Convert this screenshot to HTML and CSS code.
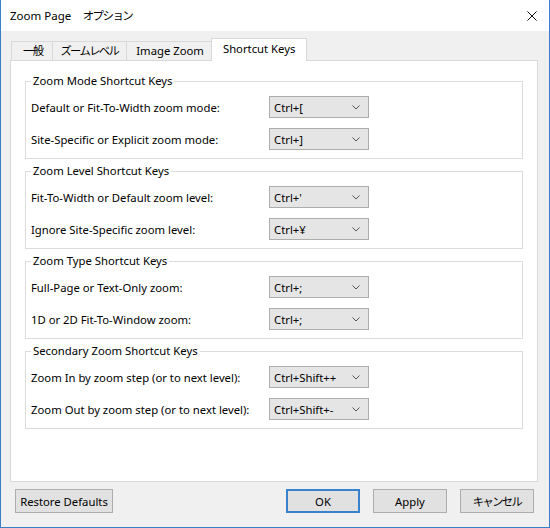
FILE: index.html
```html
<!DOCTYPE html>
<html lang="ja">
<head>
    <meta charset="UTF-8">
    <title>Zoom Page オプション</title>
    <link rel="stylesheet" href="styles.css">
</head>
<body>
    <div class="window">
        <div class="titlebar">
            <span class="title">Zoom Page　<span class="ja">オプション</span></span>
            <svg class="close" width="10" height="10" viewBox="0 0 10 10">
                <path d="M0.5 0.5 L9.5 9.5 M9.5 0.5 L0.5 9.5" stroke="#111" stroke-width="1" fill="none"/>
            </svg>
        </div>

        <div class="dialog">
            <div class="tabs">
                <div class="tab wide"><span class="ja">一般</span></div>
                <div class="tab narrow"><span class="ja">ズームレベル</span></div>
                <div class="tab">Image Zoom</div>
                <div class="tab active">Shortcut Keys</div>
            </div>

            <div class="panel">
                <fieldset class="group">
                    <legend>Zoom Mode Shortcut Keys</legend>
                    <div class="row">
                        <label>Default or Fit-To-Width zoom mode:</label>
                        <div class="combo"><span>Ctrl+[</span><svg width="8" height="5" viewBox="0 0 8 5"><path d="M0.5 0.5 L4 4 L7.5 0.5" stroke="#555" fill="none"/></svg></div>
                    </div>
                    <div class="row">
                        <label>Site-Specific or Explicit zoom mode:</label>
                        <div class="combo"><span>Ctrl+]</span><svg width="8" height="5" viewBox="0 0 8 5"><path d="M0.5 0.5 L4 4 L7.5 0.5" stroke="#555" fill="none"/></svg></div>
                    </div>
                </fieldset>

                <fieldset class="group">
                    <legend>Zoom Level Shortcut Keys</legend>
                    <div class="row">
                        <label>Fit-To-Width or Default zoom level:</label>
                        <div class="combo"><span>Ctrl+'</span><svg width="8" height="5" viewBox="0 0 8 5"><path d="M0.5 0.5 L4 4 L7.5 0.5" stroke="#555" fill="none"/></svg></div>
                    </div>
                    <div class="row">
                        <label>Ignore Site-Specific zoom level:</label>
                        <div class="combo"><span>Ctrl+¥</span><svg width="8" height="5" viewBox="0 0 8 5"><path d="M0.5 0.5 L4 4 L7.5 0.5" stroke="#555" fill="none"/></svg></div>
                    </div>
                </fieldset>

                <fieldset class="group">
                    <legend>Zoom Type Shortcut Keys</legend>
                    <div class="row">
                        <label>Full-Page or Text-Only zoom:</label>
                        <div class="combo"><span>Ctrl+;</span><svg width="8" height="5" viewBox="0 0 8 5"><path d="M0.5 0.5 L4 4 L7.5 0.5" stroke="#555" fill="none"/></svg></div>
                    </div>
                    <div class="row">
                        <label>1D or 2D Fit-To-Window zoom:</label>
                        <div class="combo"><span>Ctrl+;</span><svg width="8" height="5" viewBox="0 0 8 5"><path d="M0.5 0.5 L4 4 L7.5 0.5" stroke="#555" fill="none"/></svg></div>
                    </div>
                </fieldset>

                <fieldset class="group">
                    <legend>Secondary Zoom Shortcut Keys</legend>
                    <div class="row">
                        <label>Zoom In by zoom step (or to next level):</label>
                        <div class="combo"><span>Ctrl+Shift++</span><svg width="8" height="5" viewBox="0 0 8 5"><path d="M0.5 0.5 L4 4 L7.5 0.5" stroke="#555" fill="none"/></svg></div>
                    </div>
                    <div class="row">
                        <label>Zoom Out by zoom step (or to next level):</label>
                        <div class="combo"><span>Ctrl+Shift+-</span><svg width="8" height="5" viewBox="0 0 8 5"><path d="M0.5 0.5 L4 4 L7.5 0.5" stroke="#555" fill="none"/></svg></div>
                    </div>
                </fieldset>
            </div>

            <div class="buttons">
                <button class="restore">Restore Defaults</button>
                <div class="spacer"></div>
                <button class="default">OK</button>
                <button>Apply</button>
                <button><span class="ja">キャンセル</span></button>
            </div>
        </div>
    </div>
</body>
</html>
```

FILE: styles.css
```css
body {
    margin: 0;
    padding: 0;
    font-family: 'Noto Sans', 'Noto Sans CJK JP', sans-serif;
    font-size: 11.3px;
    color: #000;
    background-color: #f0f0f0;
}

/* Japanese glyphs run narrower in the Windows UI font */
.ja {
    letter-spacing: -1.6px;
}

.window {
    box-sizing: border-box;
    width: 550px;
    height: 528px;
    border: 1px solid #3d7fc4;
    border-top: none;
    background-color: #f0f0f0;
    display: flex;
    flex-direction: column;
}

.titlebar {
    height: 31px;
    background-color: #fff;
    display: flex;
    align-items: center;
    padding: 0 12px 0 9px;
    flex-shrink: 0;
}

.title {
    flex: 1;
    font-size: 11.5px;
    margin-top: -1px;
}

.close {
    display: block;
}

.dialog {
    padding: 7px 11px 0 9px;
}

.tabs {
    display: flex;
    align-items: flex-end;
    height: 22px;
    padding-left: 2px;
}

.tab {
    box-sizing: border-box;
    height: 19px;
    line-height: 17px;
    padding: 0 9px;
    border: 1px solid #d9d9d9;
    border-bottom: none;
    margin-left: -1px;
    background-color: #f0f0f0;
    white-space: nowrap;
}

.tab.wide {
    padding: 0 10px 0 11px;
}

.tab.narrow {
    padding: 0 8px 0 7px;
}

.tab.active {
    position: relative;
    height: 23px;
    line-height: 19px;
    margin: 0 -2px -1px -3px;
    padding: 0 11px;
    background-color: #fff;
    z-index: 1;
}

.panel {
    box-sizing: border-box;
    height: 422px;
    border: 1px solid #d9d9d9;
    background-color: #fff;
    padding: 12px 14px 0 14px;
    display: flex;
    flex-direction: column;
    gap: 4px;
}

.group {
    margin: 0;
    padding: 7px 5px 8px 5px;
    border: 1px solid #dcdcdc;
    min-width: 0;
}

.group legend {
    padding: 0 2px 0 2px;
    line-height: 16px;
}

.row {
    display: grid;
    grid-template-columns: 238px 100px;
    align-items: center;
    height: 22px;
}

.row + .row {
    margin-top: 10px;
}

.combo {
    box-sizing: border-box;
    height: 22px;
    border: 1px solid #adadad;
    background-color: #e5e5e5;
    display: flex;
    align-items: center;
    justify-content: space-between;
    padding: 0 8px 0 4px;
}

.combo svg {
    display: block;
}

.buttons {
    display: flex;
    align-items: center;
    gap: 13px;
    margin-top: 7px;
    padding: 0 4px 0 5px;
}

.spacer {
    flex: 1;
}

button {
    box-sizing: border-box;
    width: 74px;
    height: 24px;
    font-family: 'Noto Sans', 'Noto Sans CJK JP', sans-serif;
    font-size: 11.3px;
    color: #000;
    background-color: #e1e1e1;
    border: 1px solid #adadad;
    border-radius: 0;
    padding: 0;
}

button.restore {
    width: 98px;
}

button.default {
    border: 2px solid #3a82cc;
}
```
